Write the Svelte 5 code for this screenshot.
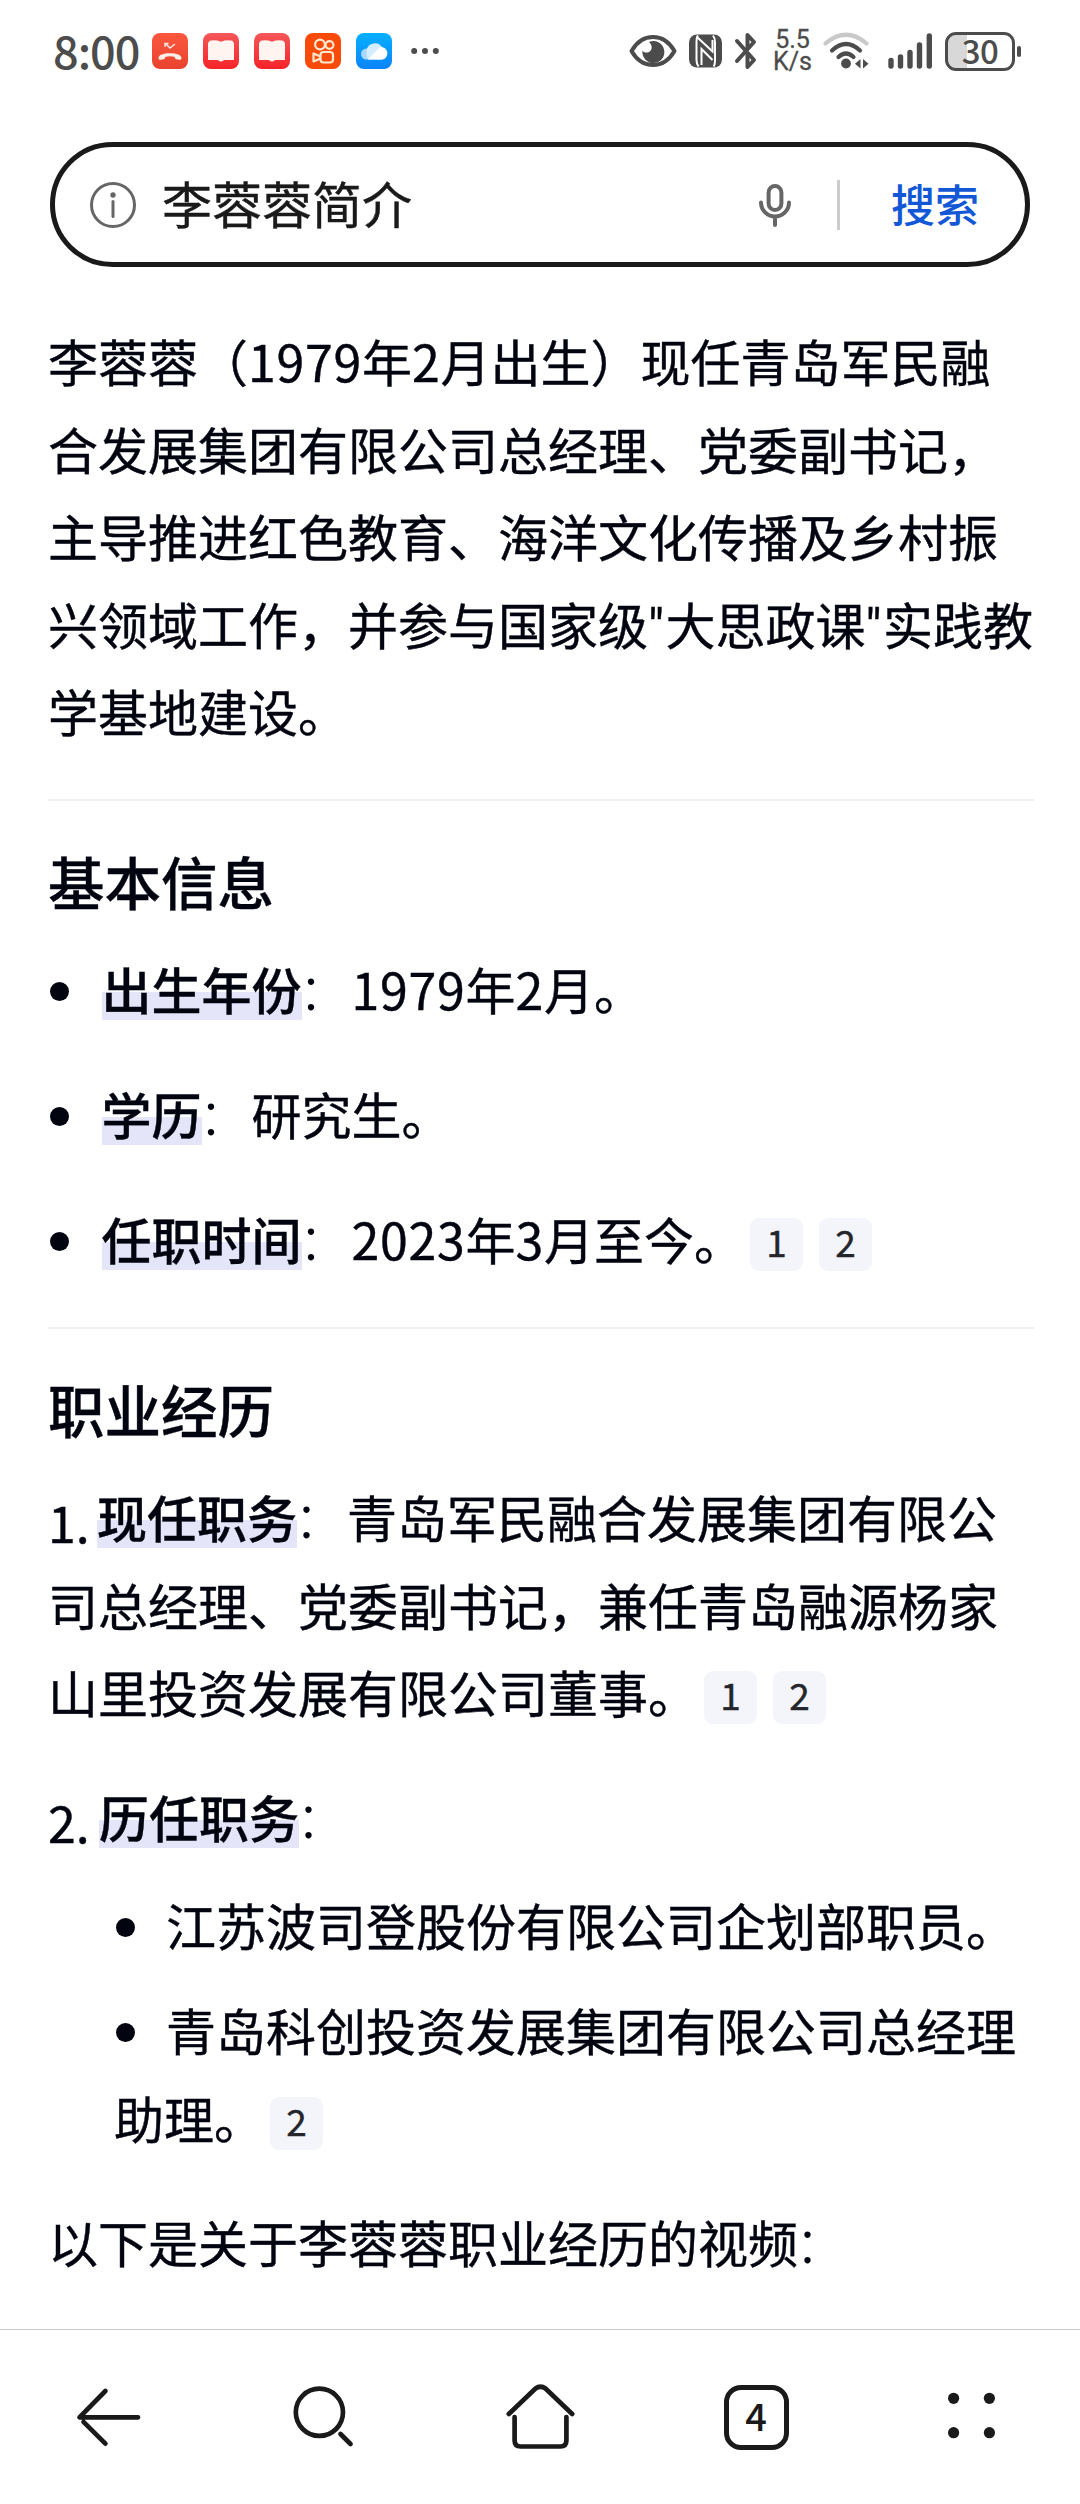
<script>
  const facts = [
    { label: '出生年份', parts: ['1979', '年', '2', '月。'], refs: [] },
    { label: '学历', parts: ['', '研究生。'], refs: [] },
    { label: '任职时间', parts: ['2023', '年', '3', '月至今。'], refs: [1, 2] }
  ];
</script>

{#snippet cite(list)}{#each list as n}<span class="cite">{n}</span>{/each}{/snippet}

{#snippet book(id)}
  <svg class="app" width="36" height="36" viewBox="0 0 36 36">
    <defs><linearGradient {id} x1="0" y1="0" x2="0" y2="1"><stop offset="0" stop-color="#f5575a" /><stop offset="1" stop-color="#f52328" /></linearGradient></defs>
    <rect width="36" height="36" rx="8" fill="url(#{id})" />
    <path d="M6.500 7.800Q12.500 6.500 18 8.800 23.500 6.500 29.500 7.800q.5 1.500 1.500 2.200v17h-9.500L18 28.800 14.500 27H5V10q1-.7 1.500-2.200z" fill="#fff4f0" />
  </svg>
{/snippet}

<div class="page">
  <header class="status">
    <span class="clock">8:00</span>
    <div class="apps">
      <svg width="36" height="36" viewBox="0 0 36 36">
        <defs><linearGradient id="call" x1="0" y1="0" x2="0" y2="1"><stop offset="0" stop-color="#fb573f" /><stop offset="1" stop-color="#e9432f" /></linearGradient></defs>
        <rect width="36" height="36" rx="8" fill="url(#call)" />
        <path d="M13.500 10.500l4.500 4.500 5-4M13 14v-3.500h3.500" fill="none" stroke="#ffe9e2" stroke-width="1.400" />
        <path d="M6.500 25c0-3.200 5-4.800 11.500-4.800s11.500 1.600 11.500 4.800c0 1.500-1 2-2.500 1.700l-2.600-.5c-1.400-.4-1.500-1-1.600-2.300-2.800-.8-6.800-.8-9.600 0-.1 1.300-.2 1.900-1.600 2.300l-2.600.5c-1.500.3-2.500-.2-2.500-1.700z" fill="#ffeee8" />
      </svg>
      {@render book('booka')}
      {@render book('bookb')}
      <svg width="36" height="36" viewBox="0 0 36 36">
        <rect width="36" height="36" rx="8" fill="#f84a08" />
        <g fill="none" stroke="#ffe8cf" stroke-width="2.200" stroke-linejoin="round">
          <circle cx="15" cy="11.500" r="4.900" /><circle cx="24.500" cy="12" r="3.900" />
          <rect x="15.500" y="19" width="12.500" height="10.500" rx="3" /><path d="M15.500 23.500L8.500 20.500v8l7-3" />
        </g>
      </svg>
      <svg width="36" height="36" viewBox="0 0 36 36">
        <defs><linearGradient id="sky" x1="0" y1="0" x2="0" y2="1"><stop offset="0" stop-color="#06b0ff" /><stop offset="1" stop-color="#0b84fb" /></linearGradient></defs>
        <rect width="36" height="36" rx="8" fill="url(#sky)" />
        <circle cx="10.500" cy="21" r="5.500" fill="#a8d8ff" />
        <path d="M12 26.500c-1.500-3-1.500-6-1.500-9a8.500 8.500 0 0 1 16-2.500 5.900 5.900 0 0 1-.5 11.500z" fill="#d3edff" />
        <path d="M12 26.500L24 14a6 6 0 0 1 2 12.500z" fill="#fff" />
      </svg>
    </div>
    <svg class="more" width="28" height="8" viewBox="0 0 28 8" fill="#4c4c4c"><circle cx="3.200" cy="4" r="3" /><circle cx="14" cy="4" r="3" /><circle cx="24.800" cy="4" r="3" /></svg>

    <div class="system">
      <svg width="48" height="34" viewBox="0 0 48 34">
        <path d="M2.500 17C8 7.500 15 3 24 3s16 4.500 21.500 14C40 26.500 33 31 24 31S8 26.500 2.500 17z" fill="none" stroke="#4c4c4c" stroke-width="4" stroke-linejoin="round" />
        <path d="M20 8a11 11 0 1 1-6.500 8.500C15 19.500 21 19.500 22.500 15c.8-2.800-.5-5-2.500-7z" fill="#4c4c4c" />
      </svg>
      <svg class="nfc" width="33" height="34" viewBox="0 0 33 34">
        <rect y=".5" width="33" height="33" rx="8" fill="#4c4c4c" />
        <g fill="none" stroke="#fff" stroke-width="2">
          <path d="M9 1.500Q7.500 3 7.500 8v18q0 4 2 6.500" />
          <path d="M24 1.500q2 2.500 2 6.500v18q0 5-1.500 6.500" />
          <path d="M8 3l15.500 14.500V6M12.500 31V15l11 11" />
        </g>
      </svg>
      <svg class="bt" width="24" height="38" viewBox="0 0 24 38" fill="none" stroke="#4c4c4c" stroke-width="4" stroke-linejoin="round" stroke-linecap="round">
        <path d="M3 9l17 19-6.500 7V23M3 29l17-19-6.500-7v12" />
      </svg>
      <div class="speed"><span>5.5</span><span>K/s</span></div>
      <svg class="wifi" width="46" height="38" viewBox="0 0 46 38" fill="none" stroke-width="4.200" stroke-linecap="round">
        <path d="M2.500 11.500Q23-6 43.500 11.500" stroke="#c9c9c9" />
        <path d="M9 18.500Q23 5.500 37 18.500M15.500 25Q23 18 30.500 25" stroke="#4c4c4c" />
        <circle cx="23" cy="31.500" r="4.900" fill="#4c4c4c" />
        <path d="M37.500 27v9.500L32 31.700zM40 27v9.500l5.500-4.800z" fill="#4c4c4c" />
      </svg>
      <svg class="signal" width="45" height="36" viewBox="0 0 45 36" stroke="#4c4c4c" stroke-width="5.400" stroke-linecap="round">
        <path d="M3 27.500V33M12.500 24V33M22 19.500V33M31.500 12V33M41.300 3V33" />
      </svg>
      <div class="battery"><span>30</span></div>
      <i class="cap"></i>
    </div>
  </header>

  <div class="search">
    <svg width="48" height="48" viewBox="0 0 48 48" fill="none" stroke="#666" stroke-width="3">
      <circle cx="24" cy="24" r="21.500" /><path d="M24 20.500v15" stroke-linecap="round" /><circle cx="24" cy="14" r="2.700" fill="#666" stroke="none" />
    </svg>
    <span class="query">李蓉蓉简介</span>
    <svg class="mic" width="34" height="44" viewBox="0 0 34 44" fill="none" stroke="#666" stroke-width="4" stroke-linecap="round">
      <rect x="10.600" y="3" width="12.800" height="24" rx="6.400" /><path d="M3 19.500a14 14 0 0 0 28 0M17 34v8" />
    </svg>
    <i class="divider"></i>
    <span class="go">搜索</span>
  </div>

  <main>
    <p>李蓉蓉（<span class="num">1979</span>年<span class="num">2</span>月出生）现任青岛军民融<br />合发展集团有限公司总经理、党委副书记，<br />主导推进红色教育、海洋文化传播及乡村振<br />兴领域工作，并参与国家级<span class="quote">"</span>大思政课<span class="quote">"</span>实践教<br />学基地建设。</p>

    <hr />
    <h2>基本信息</h2>
    <ul class="facts">
      {#each facts as f}
        <li><b>{f.label}</b><span class="colon">：</span>{#each f.parts as part, i}{#if i % 2 === 0}<span class="num">{part}</span>{:else}{part}{/if}{/each}{@render cite(f.refs)}</li>
      {/each}
    </ul>

    <hr />
    <h2>职业经历</h2>
    <div class="jobs">
      <p><span class="order">1.</span><b>现任职务</b><span class="colon">：</span>青岛军民融合发展集团有限公<br />司总经理、党委副书记，兼任青岛融源杨家<br />山里投资发展有限公司董事。{@render cite([1, 2])}</p>
      <p><span class="order two">2.</span><b>历任职务</b><span class="colon">：</span></p>
    </div>
    <ul class="past">
      <li>江苏波司登股份有限公司企划部职员。</li>
      <li>青岛科创投资发展集团有限公司总经理<br />助理。{@render cite([2])}</li>
    </ul>
    <p class="outro">以下是关于李蓉蓉职业经历的视频<span class="colon">：</span></p>
  </main>

  <nav>
    <div>
      <svg width="72" height="72" viewBox="0 0 72 72"><path d="M33.400 10L7.500 36.300H66M33.400 62.700L11.500 40.800" /></svg>
    </div>
    <div>
      <svg width="72" height="72" viewBox="0 0 72 72"><circle cx="31.400" cy="31.300" r="23.600" /><path d="M52.500 53l10 10" /></svg>
    </div>
    <div>
      <svg width="72" height="72" viewBox="0 0 72 72"><path d="M4.800 33L31.500 7.500Q36.500 4 41.500 7.500L68.200 33M10.600 36v23.500q0 6 6 6h39.800q6 0 6-6V36" /></svg>
    </div>
    <div><span class="tabs">4</span></div>
    <div>
      <svg width="72" height="72" viewBox="0 0 72 72"><g class="dots"><circle cx="17.600" cy="17.300" r="5.600" /><circle cx="53.400" cy="17.300" r="5.600" /><circle cx="17.600" cy="51.700" r="5.600" /><circle cx="53.400" cy="51.700" r="5.600" /></g></svg>
    </div>
  </nav>
</div>

<style>
  :global(body) { background: #fff; }
  .page {
    width: 1080px; height: 2504px; display: flex; flex-direction: column; overflow: hidden;
    font-family: "Noto Sans CJK SC", "Noto Sans", sans-serif; color: #020410; white-space: nowrap;
  }
  svg { display: block; flex: none; }

  .status { height: 102px; display: flex; align-items: center; padding-left: 53px; color: #4c4c4c; }
  .clock { width: 99px; font-size: 45px; line-height: 60px; font-weight: 500; letter-spacing: -1px; padding-bottom: 3px; }
  .apps { display: flex; gap: 15px; }
  .more { margin-left: 19px; }
  .system { margin-left: auto; padding-right: 59px; display: flex; align-items: center; }
  .nfc { margin-left: 12px; }
  .bt { margin-left: 12px; }
  .speed { width: 35px; margin-left: 17px; display: flex; flex-direction: column; align-items: center; font: 400 25px/22px Roboto, sans-serif; -webkit-text-stroke: .3px; }
  .wifi { margin-left: 13px; }
  .signal { margin-left: 19px; }
  .battery {
    box-sizing: border-box; width: 70px; height: 39px; margin-left: 12px; border: 3px solid #4c4c4c; border-radius: 11px;
    background: linear-gradient(90deg, #d8d8d8 19px, #fff 19px); font-size: 33px; font-weight: 500; line-height: 30px; text-align: center; letter-spacing: -.5px;
  }
  .cap { width: 4px; height: 11px; margin-left: 2px; border-radius: 2px; background: #4c4c4c; }

  .search {
    box-sizing: border-box; width: 980px; height: 125px; margin: 40px 0 0 50px; border: 5px solid #1a1a1a; border-radius: 63px;
    display: flex; align-items: center; padding-left: 34px; color: #1a1a1a;
  }
  .query { margin-left: 25px; padding-bottom: 5px; font-size: 50px; line-height: 72px; -webkit-text-stroke: .4px; }
  .mic { margin-left: auto; }
  .divider { width: 3px; height: 50px; margin-left: 45px; background: #ccc; }
  .go { margin: 0 46px 0 51px; padding-bottom: 4px; font-size: 44px; line-height: 64px; font-weight: 500; color: #1257d6; }

  main { padding: 50px 46px 0 48px; font-size: 50px; line-height: 87.5px; -webkit-text-stroke: .4px; }
  p, h2, ul { margin: 0; padding: 0; }
  ul { list-style: none; }
  hr { height: 2px; margin: 44.5px 0 38.5px; border: 0; background: #efeff1; }
  h2 { height: 80px; margin-bottom: 25.5px; font-size: 56.500px; line-height: 80px; font-weight: 500; }
  b { font-weight: 500; background: linear-gradient(transparent 40px, #e5e5fa 40px, #e5e5fa 68px, transparent 68px); }
  .num { letter-spacing: .75px; }
  .quote { font-family: Roboto, sans-serif; letter-spacing: 1.500px; line-height: 1; }
  .colon { margin: 0 3px 0 -3px; font-weight: 300; -webkit-text-stroke: 0; }
  .facts, .jobs { display: flex; flex-direction: column; gap: 37.5px; }
  li::before {
    content: ""; display: inline-block; width: 19px; height: 19px; border-radius: 50%; background: #020410;
    margin: 0 31px 0 2px; vertical-align: 9px;
  }
  .facts li::before { margin-right: 32.500px; }
  .order { display: inline-block; width: 49px; line-height: 60px; vertical-align: -5px; }
  .order.two { width: 51px; }
  .past { margin-top: 20px; padding-left: 66px; display: flex; flex-direction: column; gap: 18px; }
  .outro { margin-top: 37px; }
  .cite {
    display: inline-block; width: 53px; height: 53px; margin: 0 10px 0 6px; border-radius: 9px; background: #f4f5fb;
    color: #25262c; font-size: 37px; line-height: 46px; text-align: center; vertical-align: 3px; letter-spacing: 0;
  }

  nav { height: 174px; margin-top: auto; border-top: 1px solid #c9c9c9; display: grid; grid-template-columns: repeat(5, 1fr); align-items: center; }
  nav div { display: flex; justify-content: center; }
  nav svg { overflow: visible; fill: none; stroke: #1a1a1a; stroke-width: 4.700px; stroke-linecap: round; stroke-linejoin: round; }
  nav .dots { fill: #1a1a1a; stroke: none; }
  .tabs {
    box-sizing: border-box; width: 65px; height: 65px; border: 5px solid #1a1a1a; border-radius: 17px; color: #1a1a1a;
    font-size: 38px; line-height: 49px; font-weight: 500; text-align: center;
  }
</style>
